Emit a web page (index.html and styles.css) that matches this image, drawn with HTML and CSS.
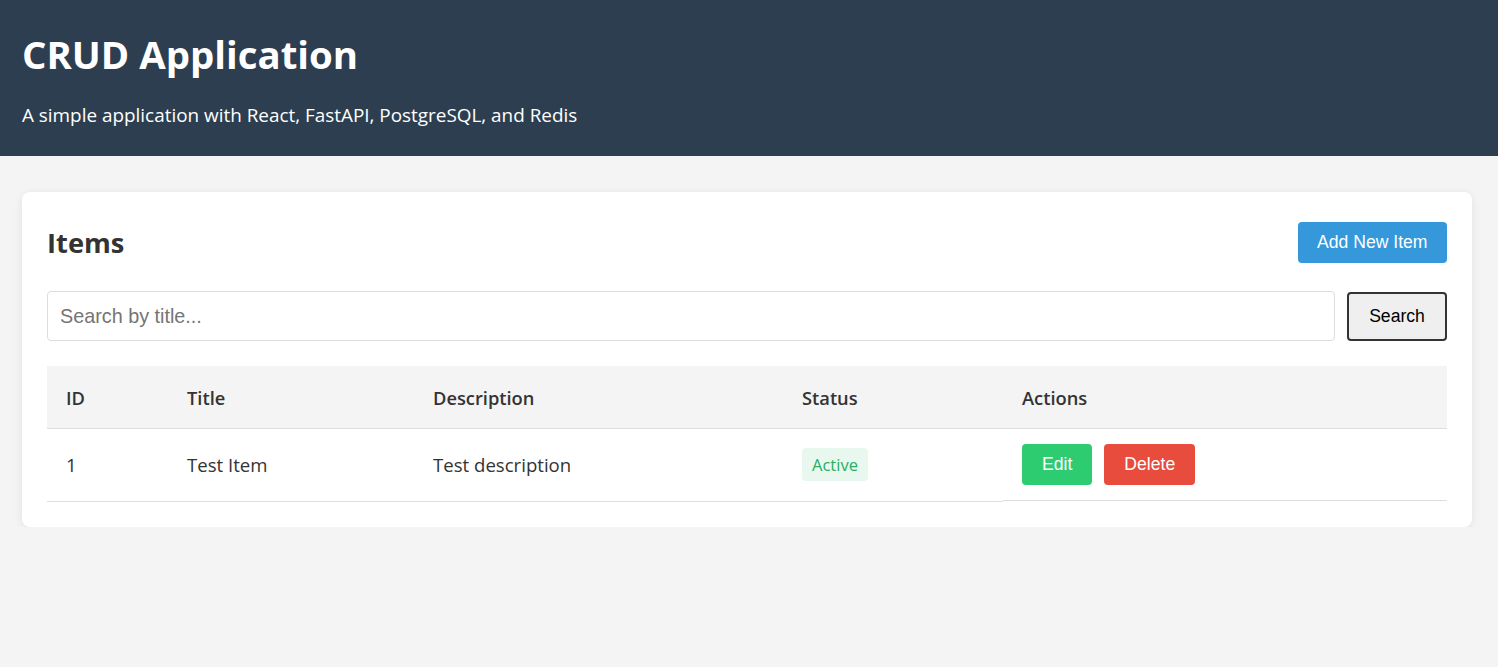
FILE: index.html
```html
<!DOCTYPE html>
<html lang="en">
<head>
<meta charset="utf-8">
<title>CRUD Application</title>
<link rel="stylesheet" href="styles.css">
</head>
<body>
<header class="app-header">
  <h1 class="app-title">CRUD Application</h1>
  <p class="app-subtitle">A simple application with React, FastAPI, PostgreSQL, and Redis</p>
</header>
<main class="app-main">
  <section class="card">
    <div class="card-head">
      <h2 class="card-title">Items</h2>
      <button class="btn btn-primary">Add New Item</button>
    </div>
    <form class="search-row">
      <input class="search-input" type="text" placeholder="Search by title...">
      <button class="search-btn" type="button">Search</button>
    </form>
    <table class="items-table">
      <thead>
        <tr>
          <th class="col-id">ID</th>
          <th class="col-title">Title</th>
          <th class="col-desc">Description</th>
          <th class="col-status">Status</th>
          <th class="col-actions">Actions</th>
        </tr>
      </thead>
      <tbody>
        <tr>
          <td>1</td>
          <td>Test Item</td>
          <td>Test description</td>
          <td><span class="badge">Active</span></td>
          <td class="actions"><button class="btn btn-edit">Edit</button><button class="btn btn-delete">Delete</button></td>
        </tr>
      </tbody>
    </table>
  </section>
</main>
</body>
</html>
```
FILE: styles.css
```css
* { box-sizing: border-box; }
body {
  margin: 0;
  background: #f4f4f4;
  font-family: "Open Sans", "Noto Sans", sans-serif;
  color: #333;
}
.app-header {
  background: #2c3e50;
  color: #fff;
  padding: 30px 22px 29px;
}
.app-title {
  margin: 0 0 25px;
  font-size: 38.4px;
  line-height: 48px;
  font-weight: 700;
}
.app-subtitle {
  margin: 0;
  font-size: 18.9px;
  line-height: 24px;
}
.app-main {
  margin: 36px 26px 0 22px;
}
.card {
  background: #fff;
  border-radius: 8px;
  box-shadow: 0 2px 10px rgba(0,0,0,0.08);
  padding: 30px 25px 25px;
}
.card-head {
  display: flex;
  justify-content: space-between;
  align-items: center;
  margin-bottom: 28px;
}
.card-title {
  margin: 0;
  font-size: 27.3px;
  line-height: 41px;
  font-weight: 700;
  color: #333;
}
.btn {
  font-family: "Liberation Sans", Arial, sans-serif;
  font-size: 17.6px;
  line-height: 21px;
  padding: 10px 20px;
  border: none;
  border-radius: 4px;
  color: #fff;
  cursor: pointer;
}
.btn-primary { background: #3498db; padding: 10px 19.5px; }
.btn-edit { background: #2ecc71; }
.btn-delete { background: #e74c3c; }
.search-row {
  display: flex;
  align-items: center;
  gap: 12px;
  margin: 0 0 25px;
}
.search-input {
  flex: 1;
  height: 50px;
  padding: 0 12px;
  border: 1px solid #ddd;
  border-radius: 4px;
  font-family: "Liberation Sans", Arial, sans-serif;
  font-size: 19.8px;
  color: #333;
}
.search-input::placeholder { color: #757575; }
.search-btn {
  width: 100px;
  height: 49px;
  background: #efefef;
  border: 2px solid #333;
  border-radius: 4px;
  font-family: "Liberation Sans", Arial, sans-serif;
  font-size: 17.6px;
  color: #000;
}
.items-table {
  width: 100%;
  border-collapse: collapse;
  table-layout: fixed;
  font-size: 18.6px;
}
.items-table th {
  background: #f4f4f4;
  text-align: left;
  font-weight: 600;
  font-size: 18.3px;
  line-height: 24px;
  padding: 20px 19px 18px;
  border-bottom: 1px solid #ddd;
  color: #333;
}
.col-id { width: 121px; }
.col-title { width: 246px; }
.col-desc { width: 369px; }
.col-status { width: 220px; }
.items-table td {
  padding: 15px 19px;
  line-height: 24px;
  border-bottom: 1px solid #ddd;
  vertical-align: middle;
  color: #333;
}
.items-table td.actions {
  display: flex;
  gap: 12px;
}
.badge {
  display: inline-block;
  padding: 4px 10px;
  line-height: 25px;
  border-radius: 4px;
  background: #e8f8ef;
  color: #27ae60;
  font-size: 16.5px;
}
```
